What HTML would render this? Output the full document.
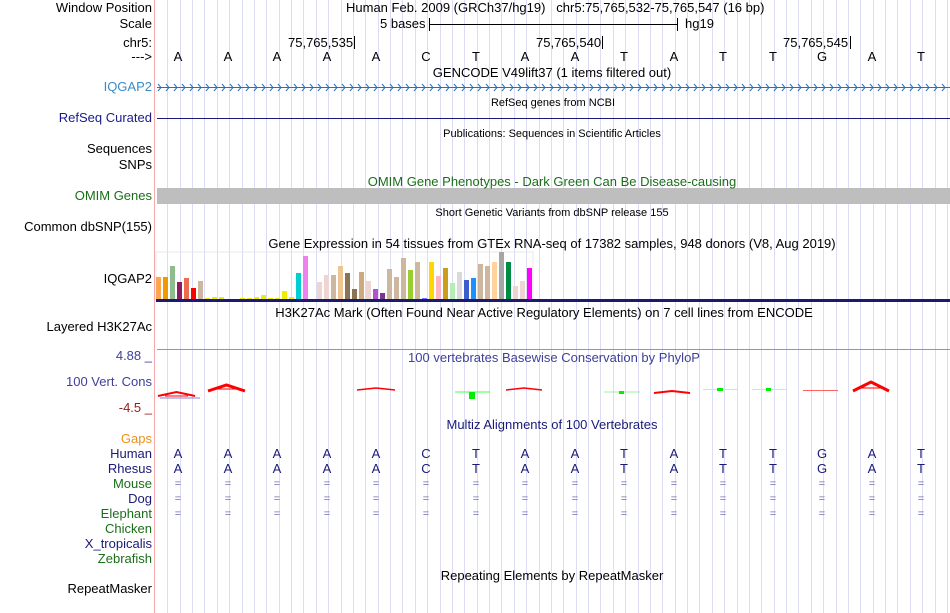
<!DOCTYPE html>
<html><head><meta charset="utf-8"><style>
body{margin:0;width:950px;height:613px;background:#fff;position:relative;overflow:hidden;font-family:"Liberation Sans",sans-serif;font-size:13px;color:#000}
.t{position:absolute;white-space:nowrap;line-height:14px}
.l{position:absolute;right:798px;white-space:nowrap;line-height:14px;text-align:right}
.c{position:absolute;white-space:nowrap;line-height:14px;transform:translateX(-50%)}
.s{font-size:11px}
</style></head><body>
<svg id="g" width="950" height="613" style="position:absolute;left:0;top:0"></svg>

<div class="l" style="top:1px">Window Position</div>
<div class="l" style="top:17px">Scale</div>
<div class="l" style="top:36px">chr5:</div>
<div class="l" style="top:50px">---&gt;</div>
<div class="l" style="top:80px;color:#3a8cc8">IQGAP2</div>
<div class="l" style="top:111px;color:#1a1a8c">RefSeq Curated</div>
<div class="l" style="top:142px">Sequences</div>
<div class="l" style="top:158px">SNPs</div>
<div class="l" style="top:189px;color:#1a6e1a">OMIM Genes</div>
<div class="l" style="top:220px">Common dbSNP(155)</div>
<div class="l" style="top:272px">IQGAP2</div>
<div class="l" style="top:320px">Layered H3K27Ac</div>
<div class="l" style="top:349px;color:#40409a">4.88 _</div>
<div class="l" style="top:375px;color:#40409a">100 Vert. Cons</div>
<div class="l" style="top:401px;color:#9a1a1a">-4.5 _</div>
<div class="l" style="top:432px;color:#f0901a">Gaps</div>
<div class="l" style="top:447px;color:#1a1a78">Human</div>
<div class="l" style="top:462px;color:#1a1a78">Rhesus</div>
<div class="l" style="top:477px;color:#1a6e1a">Mouse</div>
<div class="l" style="top:492px;color:#1a1a78">Dog</div>
<div class="l" style="top:507px;color:#1a6e1a">Elephant</div>
<div class="l" style="top:522px;color:#1a6e1a">Chicken</div>
<div class="l" style="top:537px;color:#1a1a78">X_tropicalis</div>
<div class="l" style="top:552px;color:#1a6e1a">Zebrafish</div>
<div class="l" style="top:582px">RepeatMasker</div>

<div class="t" style="left:346px;top:1px">Human Feb. 2009 (GRCh37/hg19)&nbsp;&nbsp; chr5:75,765,532-75,765,547 (16 bp)</div>
<div class="t" style="left:380px;top:17px">5 bases</div>
<div class="t" style="left:685px;top:17px">hg19</div>
<div class="t" style="left:288px;top:36px">75,765,535</div>
<div class="t" style="left:536px;top:36px">75,765,540</div>
<div class="t" style="left:783px;top:36px">75,765,545</div>
<div class="c" style="left:552px;top:66px">GENCODE V49lift37 (1 items filtered out)</div>
<div class="c s" style="left:553px;top:96px">RefSeq genes from NCBI</div>
<div class="c s" style="left:552px;top:127px">Publications: Sequences in Scientific Articles</div>
<div class="c" style="left:552px;top:175px;color:#1a6e1a">OMIM Gene Phenotypes - Dark Green Can Be Disease-causing</div>
<div class="c s" style="left:552px;top:206px">Short Genetic Variants from dbSNP release 155</div>
<div class="c" style="left:552px;top:237px">Gene Expression in 54 tissues from GTEx RNA-seq of 17382 samples, 948 donors (V8, Aug 2019)</div>
<div class="c" style="left:544px;top:306px">H3K27Ac Mark (Often Found Near Active Regulatory Elements) on 7 cell lines from ENCODE</div>
<div class="c" style="left:554px;top:351px;color:#40409a">100 vertebrates Basewise Conservation by PhyloP</div>
<div class="c" style="left:552px;top:418px;color:#1a1a78">Multiz Alignments of 100 Vertebrates</div>
<div class="c" style="left:552px;top:569px">Repeating Elements by RepeatMasker</div>

<script>
var g=document.getElementById('g'),h='';
h+='<rect x="154" y="0" width="1" height="613" fill="#f4aaaa"/>';
for(var k=0;k<64;k++){var x=167.3+k*12.375;h+='<rect x="'+Math.round(x)+'" y="0" width="1" height="613" fill="#dcdcf4"/>';}
h+='<line x1="429" y1="24.5" x2="678" y2="24.5" stroke="#000"/><line x1="429.5" y1="18" x2="429.5" y2="31" stroke="#000"/><line x1="677.5" y1="18" x2="677.5" y2="31" stroke="#000"/>';
[354,602,850].forEach(function(x){h+='<line x1="'+(x+.5)+'" y1="36" x2="'+(x+.5)+'" y2="49" stroke="#000"/>';});
h+='<line x1="157" y1="87.5" x2="950" y2="87.5" stroke="#2e6fae"/>';
for(var x=158;x<950;x+=8)h+='<polyline points="'+x+',84 '+(x+3)+',87.5 '+x+',91" fill="none" stroke="#2e6fae"/>';
h+='<rect x="157" y="118" width="793" height="1" fill="#1a1a78"/>';
h+='<rect x="157" y="188" width="793" height="16" fill="#bebebe"/>';
h+='<rect x="156" y="252" width="377" height="48" fill="none" stroke="#e8e8e8"/>';
var bars=[["#FFA54F",23],["#EE9A00",23],["#8FBC8F",34],["#8B1C62",18],["#EE6A50",22],["#FF0000",12],["#CDB79E",19],["#EEEE00",2],["#EEEE00",3],["#EEEE00",3],["#EEEE00",1],["#EEEE00",1],["#EEEE00",2],["#EEEE00",2],["#EEEE00",3],["#EEEE00",5],["#EEEE00",2],["#EEEE00",2],["#EEEE00",9],["#EEEE00",3],["#00CED1",27],["#EE82EE",44],["#cccccc",1],["#EED5D2",18],["#EED5D2",25],["#CDB79E",25],["#EEC591",34],["#8B7355",27],["#8B7355",11],["#CDAA7D",28],["#EED5D2",19],["#B452CD",11],["#7A378B",7],["#CDB79E",31],["#CDB79E",23],["#CDB79E",42],["#9ACD32",30],["#CDB79E",38],["#7777FF",2],["#FFD700",38],["#FFB6C1",24],["#CD9B1D",32],["#B4EEB4",17],["#D9D9D9",28],["#3A5FCD",20],["#1E90FF",22],["#CDB79E",36],["#CDB79E",34],["#FFD39B",38],["#A6A6A6",48],["#008B45",38],["#EED5D2",14],["#EED5D2",19],["#FF00FF",32]];
bars.forEach(function(b,i){h+='<rect x="'+(156+i*7)+'" y="'+(300-b[1])+'" width="5" height="'+b[1]+'" fill="'+b[0]+'"/>';});
h+='<rect x="156" y="299" width="794" height="3" fill="#1a1a6e"/>';
h+='<rect x="157" y="349" width="793" height="1" fill="#80a880"/>';
function hump(x1,x2,yb,yt,w){return '<polyline points="'+x1+','+yb+' '+((x1+x2)/2)+','+yt+' '+x2+','+yb+'" fill="none" stroke="red" stroke-width="'+w+'"/>';}
h+='<line x1="160" y1="398" x2="200" y2="398" stroke="#8080e0"/>'+hump(158,195,396,392,2)+'<line x1="165" y1="396" x2="188" y2="396" stroke="red"/>';
h+=hump(208,245,391,385,3)+'<line x1="215" y1="389" x2="238" y2="389" stroke="red"/>';
h+=hump(357,395,390,388,1.5);
h+='<line x1="455" y1="392" x2="490" y2="392" stroke="#40ff40"/><rect x="469" y="392" width="6" height="7" fill="#00ee00"/>';
h+=hump(506,542,390,388,1.5);
h+='<line x1="604" y1="392" x2="640" y2="392" stroke="#a0f0a0"/><rect x="619" y="391" width="5" height="3" fill="#00ee00"/>';
h+=hump(654,690,393,391,2);
h+='<line x1="703" y1="389.5" x2="738" y2="389.5" stroke="#c0f0c0"/><rect x="717" y="388" width="6" height="3" fill="#00ee00"/>';
h+='<line x1="752" y1="389.5" x2="787" y2="389.5" stroke="#c0f0c0"/><rect x="766" y="388" width="5" height="3" fill="#00ee00"/>';
h+='<line x1="803" y1="390.5" x2="838" y2="390.5" stroke="#ff6060"/>';
h+=hump(853,889,391,382,3)+'<line x1="860" y1="388" x2="882" y2="388" stroke="red"/>';
g.innerHTML=h;
</script>
<div style="position:absolute;left:0;top:0">
<div class="c" style="left:178px;top:50px">A</div><div class="c" style="left:228px;top:50px">A</div><div class="c" style="left:277px;top:50px">A</div><div class="c" style="left:327px;top:50px">A</div><div class="c" style="left:376px;top:50px">A</div><div class="c" style="left:426px;top:50px">C</div><div class="c" style="left:476px;top:50px">T</div><div class="c" style="left:525px;top:50px">A</div><div class="c" style="left:575px;top:50px">A</div><div class="c" style="left:624px;top:50px">T</div><div class="c" style="left:674px;top:50px">A</div><div class="c" style="left:723px;top:50px">T</div><div class="c" style="left:773px;top:50px">T</div><div class="c" style="left:822px;top:50px">G</div><div class="c" style="left:872px;top:50px">A</div><div class="c" style="left:921px;top:50px">T</div>
</div>
<div style="position:absolute;left:0;top:0;color:#1a1a78">
<div class="c" style="left:178px;top:447px">A</div><div class="c" style="left:228px;top:447px">A</div><div class="c" style="left:277px;top:447px">A</div><div class="c" style="left:327px;top:447px">A</div><div class="c" style="left:376px;top:447px">A</div><div class="c" style="left:426px;top:447px">C</div><div class="c" style="left:476px;top:447px">T</div><div class="c" style="left:525px;top:447px">A</div><div class="c" style="left:575px;top:447px">A</div><div class="c" style="left:624px;top:447px">T</div><div class="c" style="left:674px;top:447px">A</div><div class="c" style="left:723px;top:447px">T</div><div class="c" style="left:773px;top:447px">T</div><div class="c" style="left:822px;top:447px">G</div><div class="c" style="left:872px;top:447px">A</div><div class="c" style="left:921px;top:447px">T</div>
<div class="c" style="left:178px;top:462px">A</div><div class="c" style="left:228px;top:462px">A</div><div class="c" style="left:277px;top:462px">A</div><div class="c" style="left:327px;top:462px">A</div><div class="c" style="left:376px;top:462px">A</div><div class="c" style="left:426px;top:462px">C</div><div class="c" style="left:476px;top:462px">T</div><div class="c" style="left:525px;top:462px">A</div><div class="c" style="left:575px;top:462px">A</div><div class="c" style="left:624px;top:462px">T</div><div class="c" style="left:674px;top:462px">A</div><div class="c" style="left:723px;top:462px">T</div><div class="c" style="left:773px;top:462px">T</div><div class="c" style="left:822px;top:462px">G</div><div class="c" style="left:872px;top:462px">A</div><div class="c" style="left:921px;top:462px">T</div>
</div>
<div id="eq" style="position:absolute;left:0;top:0;color:#7070b0;font-size:11px"></div>
<script>
var e='',xs=[178,228,277,327,376,426,476,525,575,624,674,723,773,822,872,921];
[477,492,507].forEach(function(y){xs.forEach(function(x){e+='<div class="c" style="left:'+x+'px;top:'+y+'px">=</div>';});});
document.getElementById('eq').innerHTML=e;
</script>
</body></html>
